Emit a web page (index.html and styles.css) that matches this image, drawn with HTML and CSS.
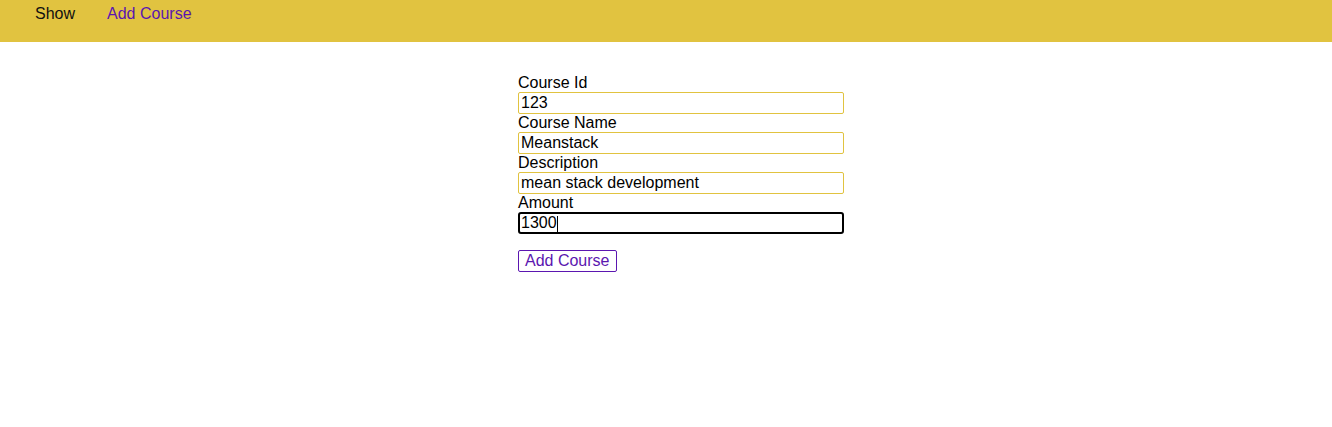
FILE: index.html
```html
<!DOCTYPE html>
<html>
<head>
<meta charset="utf-8">
<link rel="stylesheet" href="styles.css">
</head>
<body>
<nav class="navbar">
  <a class="nav-link nav-show" href="#">Show</a>
  <a class="nav-link nav-add" href="#">Add Course</a>
</nav>
<main class="page">
  <form class="course-form">
    <label class="field-label">Course Id</label>
    <input class="field-input" type="text" value="123">
    <label class="field-label">Course Name</label>
    <input class="field-input" type="text" value="Meanstack">
    <label class="field-label">Description</label>
    <input class="field-input" type="text" value="mean stack development">
    <label class="field-label">Amount</label>
    <div class="focused-wrap"><input class="field-input focused" type="text" value="1300"><span class="caret"></span></div>
    <button class="submit-btn" type="button">Add Course</button>
  </form>
</main>
</body>
</html>
```
FILE: styles.css
```css
* { box-sizing: border-box; }
html, body { margin: 0; padding: 0; background: #fff; }
body { font-family: "Liberation Sans", Arial, sans-serif; font-size: 16px; color: #000; }
.navbar {
  height: 42px;
  background: #e1c340;
  display: flex;
  align-items: flex-start;
  padding: 5px 0 0 35px;
  gap: 32px;
}
.nav-link { text-decoration: none; line-height: 18px; font-size: 16px; }
.nav-show { color: #111; }
.nav-add { color: #5b16b0; }
.page { padding: 32px 0 0 518px; }
.course-form { width: 326px; display: flex; flex-direction: column; align-items: flex-start; }
.field-label { display: block; line-height: 18px; height: 18px; font-size: 16px; }
.field-input {
  width: 326px;
  height: 22px;
  border: 1px solid #e1c340;
  border-radius: 2px;
  padding: 0 2px;
  font-family: "Liberation Sans", Arial, sans-serif;
  font-size: 16px;
  color: #000;
  background: #fff;
  outline: none;
  margin: 0;
}
.focused-wrap { position: relative; width: 326px; height: 22px; }
.field-input.focused { border: 2px solid #000; border-radius: 3px; padding: 0 1px; }
.caret { position: absolute; left: 39px; top: 4px; width: 1px; height: 16px; background: #000; }
.submit-btn {
  margin-top: 16px;
  height: 22px;
  padding: 0 6px;
  border: 1px solid #5b16b0;
  border-radius: 2px;
  background: #fff;
  color: #5b16b0;
  font-family: "Liberation Sans", Arial, sans-serif;
  font-size: 16px;
  line-height: 18px;
}
```
